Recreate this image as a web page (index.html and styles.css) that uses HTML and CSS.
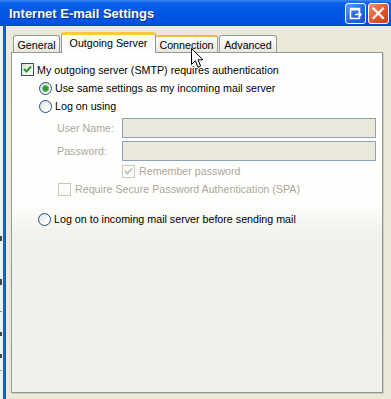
FILE: index.html
```html
<!DOCTYPE html>
<html>
<head>
<meta charset="utf-8">
<link rel="stylesheet" href="styles.css">
</head>
<body>
<div class="screen">
  <div class="titlebar">
    <span class="title">Internet E-mail Settings</span>
    <div class="tbtns">
      <span class="tb tb-blue">
        <svg width="21" height="21" viewBox="0 0 21 21">
          <rect x="5.5" y="5.5" width="9" height="10" fill="none" stroke="#fff" stroke-width="1.5"/>
          <rect x="5.5" y="5.5" width="9" height="2" fill="#fff"/>
          <path d="M10 11.5 H16 M13.5 9 L16 11.5 L13.5 14" fill="none" stroke="#fff" stroke-width="1.6"/>
        </svg>
      </span>
      <span class="tb tb-red">
        <svg width="21" height="21" viewBox="0 0 21 21">
          <path d="M5.5 5.5 L15 15 M15 5.5 L5.5 15" stroke="#fff" stroke-width="2.2" stroke-linecap="square"/>
        </svg>
      </span>
    </div>
  </div>
  <div class="row">
    <div class="bgstrip">
      <i class="mk m1"></i><i class="mk m2"></i><i class="mk m3"></i><i class="mk m4"></i><i class="mk m5"></i><i class="mk m6"></i>
    </div>
    <div class="frame"></div>
    <div class="body">
      <div class="tabs">
        <div class="tab t-general">General</div>
        <div class="tab t-sel">Outgoing Server</div>
        <div class="tab t-hot">Connection</div>
        <div class="tab t-adv">Advanced</div>
      </div>
      <div class="panel">
        <div class="line l1">
          <span class="cb"><svg width="9" height="9" viewBox="0 0 9 9"><path d="M1 4 L3.5 6.5 L8 1.5" fill="none" stroke="#21A121" stroke-width="2"/></svg></span>
          <span class="lbl">My outgoing server (SMTP) requires authentication</span>
        </div>
        <div class="line l2">
          <span class="rb on"><i></i></span>
          <span class="lbl">Use same settings as my incoming mail server</span>
        </div>
        <div class="line l2">
          <span class="rb"></span>
          <span class="lbl">Log on using</span>
        </div>
        <div class="field f1">
          <span class="flbl">User Name:</span>
          <span class="box"></span>
        </div>
        <div class="field f2">
          <span class="flbl">Password:</span>
          <span class="box"></span>
        </div>
        <div class="line l-rem">
          <span class="cb dis"><svg width="9" height="9" viewBox="0 0 9 9"><path d="M1 4 L3.5 6.5 L8 1.5" fill="none" stroke="#C9C7BA" stroke-width="2"/></svg></span>
          <span class="lbl dtext">Remember password</span>
        </div>
        <div class="line l-spa">
          <span class="cb dis"></span>
          <span class="lbl dtext">Require Secure Password Authentication (SPA)</span>
        </div>
        <div class="line l3">
          <span class="rb"></span>
          <span class="lbl">Log on to incoming mail server before sending mail</span>
        </div>
      </div>
    </div>
  </div>
  <svg class="cursor" width="13" height="21" viewBox="0 0 13 21">
    <path d="M0.5 0.5 L0.5 16.5 L4.3 12.8 L7 19.2 L9.6 18.1 L7 11.8 L12 11.8 Z" fill="#fff" stroke="#000" stroke-width="1" stroke-linejoin="miter"/>
  </svg>
</div>
</body>
</html>
```
FILE: styles.css
```css
* { box-sizing: border-box; }
html, body { margin: 0; padding: 0; }
body {
  width: 391px;
  height: 399px;
  overflow: hidden;
  font-family: Tahoma, "Liberation Sans", Arial, sans-serif;
  font-size: 10.7px;
  color: #000;
  background: #ECE9D8;
}
.screen {
  position: relative;
  width: 391px;
  height: 399px;
  overflow: hidden;
}
.titlebar {
  height: 26px;
  display: flex;
  align-items: center;
  justify-content: space-between;
  background: linear-gradient(#3A86F4 0, #0D62EC 3px, #0058E6 40%, #0054E0 85%, #0048D2 100%);
}
.title {
  color: #fff;
  font-family: "Liberation Sans", Arial, sans-serif;
  font-weight: bold;
  font-size: 13px;
  padding-left: 9px;
  padding-top: 1px;
  text-shadow: 1px 1px 0 #0A2C8C;
}
.tbtns {
  display: flex;
  gap: 2px;
  padding-right: 2px;
}
.tb {
  width: 21px;
  height: 21px;
  border: 1px solid #fff;
  border-radius: 3px;
  display: flex;
  align-items: center;
  justify-content: center;
}
.tb svg { display: block; margin: -1px; }
.tb-blue { background: linear-gradient(135deg, #5C9BF8, #1F63E6 60%, #1650D6); }
.tb-red { background: linear-gradient(135deg, #F29272, #E4532A 55%, #CC3E18); }
.row {
  display: flex;
  height: 373px;
}
.bgstrip {
  width: 3px;
  background: #F2F2F0;
  position: relative;
  display: flex;
  flex-direction: column;
}
.mk {
  display: block;
  width: 2px;
  background: #444;
}
.m1 { height: 5px; margin-top: 210px; }
.m2 { height: 6px; margin-top: 38px; }
.m3 { height: 1px; margin-top: 26px; background: #888; }
.m4 { height: 4px; margin-top: 20px; }
.m5 { height: 4px; margin-top: 18px; }
.m6 { height: 1px; margin-top: 12px; background: #999; }
.frame {
  width: 3px;
  background: linear-gradient(90deg, #0B4FD8, #1A64EC 50%, #0A47CC);
}
.body {
  flex: 1;
  background: #ECE9D8;
  border-left: 1px solid #F0EEE2;
}
.tabs {
  display: flex;
  align-items: flex-end;
  padding-top: 6px;
  padding-left: 6px;
  height: 26px;
}
.tab {
  height: 17px;
  border: 1px solid #919B9C;
  border-bottom: none;
  border-radius: 3px 3px 0 0;
  background: linear-gradient(#FFFFFF, #F3F2EE 60%, #E8E6DE);
  display: flex;
  align-items: center;
  justify-content: center;
  padding-top: 1px;
}
.t-general { width: 47px; }
.t-sel {
  width: 95px;
  height: 21px;
  margin-left: 1px;
  margin-bottom: -1px;
  background: #FCFCFE;
  border-top: 3px solid #FFC83C;
  box-shadow: inset 0 -1px 0 #FCFCFE;
  position: relative;
  z-index: 1;
  padding-top: 0;
  padding-bottom: 3px;
}
.t-hot {
  width: 63px;
  margin-left: -1px;
  border-top: 2px solid #F6B64A;
}
.t-adv { width: 58px; margin-left: 1px; }
.panel {
  margin-left: 4px;
  width: 372px;
  height: 341px;
  border: 1px solid #919B9C;
  border-right-color: #8C9596;
  border-bottom-color: #8C9596;
  box-shadow: 1px 1px 0 #D0CEBF;
  background: linear-gradient(#FFFFFF 0, #FEFEFD 150px, #F2F1EB 182px, #F1F0EA 100%);
  padding-top: 7px;
  padding-left: 9px;
}
.line {
  display: flex;
  align-items: center;
  height: 18px;
}
.l1 { height: 19px; }
.l2 { padding-left: 18px; }
.l3 { padding-left: 17px; margin-top: 12px; }
.l-rem { padding-left: 101px; }
.l-spa { padding-left: 37px; }
.lbl { margin-left: 3px; white-space: nowrap; }
.dtext { color: #ACA899; margin-left: 4px; }
.cb {
  width: 13px;
  height: 13px;
  border: 1px solid #1C5180;
  background: linear-gradient(135deg, #DCDCD7, #FFFFFF 80%);
  display: flex;
  align-items: center;
  justify-content: center;
}
.cb.dis {
  border-color: #CAC8BB;
  background: #FCFCFB;
}
.rb {
  width: 13px;
  height: 13px;
  border: 1px solid #1C5180;
  border-radius: 50%;
  background: linear-gradient(135deg, #DCDCD7, #FFFFFF 75%);
  display: flex;
  align-items: center;
  justify-content: center;
}
.rb i {
  display: block;
  width: 5px;
  height: 5px;
  border-radius: 50%;
  background: #2F9A2F;
  box-shadow: 0 0 0 1px #6CC06C;
}
.field {
  display: flex;
  align-items: center;
  height: 20px;
  padding-left: 36px;
}
.f1 { margin-top: 3px; }
.f2 { margin-top: 3px; margin-bottom: 1px; }
.flbl {
  width: 65px;
  color: #ACA899;
}
.box {
  width: 254px;
  height: 20px;
  border: 1px solid #8FA3B8;
  background: #EBE9DB;
}
.cursor {
  position: absolute;
  left: 191px;
  top: 48px;
}
```
